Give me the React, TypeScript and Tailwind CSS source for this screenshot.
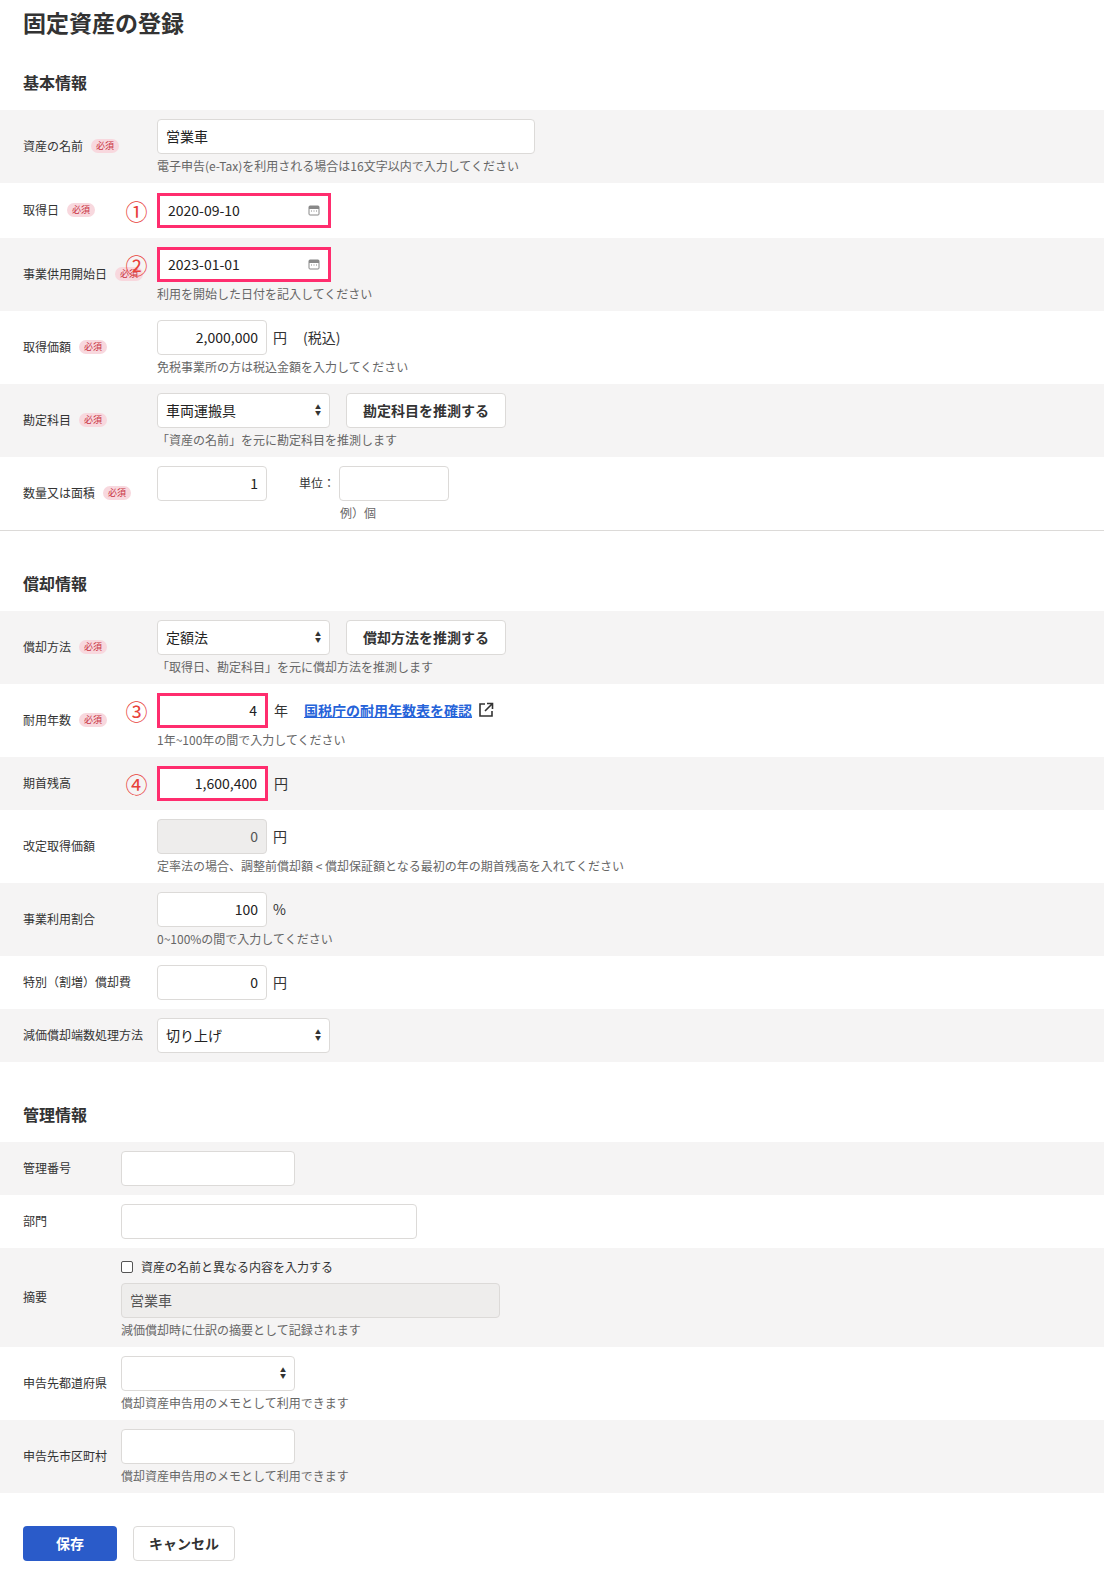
import React from "react";

const font = { fontFamily: '"Noto Sans CJK JP", "Noto Sans", sans-serif' };

function Badge() {
  return <span className="ml-2 rounded-full bg-[#f8d8de] px-[5px] text-[9px] leading-[14px] text-[#c8323f]">必須</span>;
}

function Row({ label, req, gray, children, lw = "w-[134px]" }: { label: string; req?: boolean; gray?: boolean; children: React.ReactNode; lw?: string }) {
  return (
    <div className={`flex items-center py-[9px] pl-[23px] ${gray ? "bg-[#f5f4f4]" : "bg-white"}`}>
      <div className={`${lw} shrink-0 flex items-center text-xs text-[#333]`}>
        {label}
        {req && <Badge />}
      </div>
      <div className="flex flex-col">{children}</div>
    </div>
  );
}

function Help({ children }: { children: React.ReactNode }) {
  return <div className="mt-1 text-xs leading-[16px] text-[#666]">{children}</div>;
}

function Box({ w, children, right, disabled, hl }: { w: string; children?: React.ReactNode; right?: boolean; disabled?: boolean; hl?: boolean }) {
  return (
    <div
      className={`${w} h-[35px] flex items-center rounded-[4px] px-2 text-sm text-[#222] ${right ? "justify-end" : ""} ${disabled ? "bg-[#eeedec] border border-[#dcdad8] text-[#555]" : "bg-white"} ${hl ? "border-[3px] border-[#ff2d6e] rounded-none" : disabled ? "" : "border border-[#dcdad8]"}`}
    >
      {children}
    </div>
  );
}

function Sel({ w, value }: { w: string; value: string }) {
  return (
    <div className={`${w} h-[35px] flex items-center justify-between rounded-[4px] border border-[#dcdad8] bg-white px-2 text-sm text-[#222]`}>
      <span>{value}</span>
      <span className="flex flex-col text-[6px] leading-[6px] text-[#333]">
        <span>▲</span>
        <span>▼</span>
      </span>
    </div>
  );
}

function Btn({ children }: { children: React.ReactNode }) {
  return <div className="ml-4 flex h-[35px] items-center rounded-[4px] border border-[#dcdad8] bg-white px-4 text-sm font-bold text-[#333]">{children}</div>;
}

function Num({ n }: { n: string }) {
  return <span className="w-[27px] -ml-[34px] mr-[7px] text-center text-[22px] leading-none text-[#e8413a]">{n}</span>;
}

function Cal() {
  return (
    <svg width="12" height="12" viewBox="0 0 12 12" className="ml-auto">
      <rect x="1" y="2" width="10" height="9" rx="1" fill="none" stroke="#888" />
      <rect x="1" y="2" width="10" height="3" fill="#888" />
      <path d="M3 7h1M5.5 7h1M8 7h1" stroke="#888" />
    </svg>
  );
}

const Unit = ({ children }: { children: React.ReactNode }) => <span className="ml-[6px] text-sm text-[#333]">{children}</span>;

function Heading({ children }: { children: React.ReactNode }) {
  return <h2 className="pl-[23px] pt-[40px] pb-[16px] text-base font-bold text-[#333]">{children}</h2>;
}

export default function App() {
  return (
    <div className="w-[1104px] bg-white pb-[50px]" style={font}>
      <h1 className="pl-[23px] pt-[5px] text-[23px] font-bold text-[#333]">固定資産の登録</h1>
      <h2 className="pl-[23px] pt-[30px] pb-[16px] text-base font-bold text-[#333]">基本情報</h2>

      <Row label="資産の名前" req gray>
        <Box w="w-[378px]">営業車</Box>
        <Help>電子申告(e-Tax)を利用される場合は16文字以内で入力してください</Help>
      </Row>
      <Row label="取得日" req>
        <div className="flex items-center py-[1px]">
          <Num n="①" />
          <Box w="w-[174px]" hl>2020-09-10<Cal /></Box>
        </div>
      </Row>
      <Row label="事業供用開始日" req gray>
        <div className="flex items-center">
          <Num n="②" />
          <Box w="w-[174px]" hl>2023-01-01<Cal /></Box>
        </div>
        <Help>利用を開始した日付を記入してください</Help>
      </Row>
      <Row label="取得価額" req>
        <div className="flex items-center">
          <Box w="w-[110px]" right>2,000,000</Box>
          <Unit>円</Unit>
          <span className="ml-4 text-sm text-[#333]">(税込)</span>
        </div>
        <Help>免税事業所の方は税込金額を入力してください</Help>
      </Row>
      <Row label="勘定科目" req gray>
        <div className="flex items-center">
          <Sel w="w-[173px]" value="車両運搬具" />
          <Btn>勘定科目を推測する</Btn>
        </div>
        <Help>「資産の名前」を元に勘定科目を推測します</Help>
      </Row>
      <Row label="数量又は面積" req>
        <div className="flex items-center">
          <Box w="w-[110px]" right>1</Box>
          <span className="ml-8 mr-1 text-xs text-[#333]">単位：</span>
          <Box w="w-[110px]" />
        </div>
        <div className="mt-1 pl-[183px] text-xs leading-[16px] text-[#666]">例）個</div>
      </Row>
      <div className="border-t border-[#dcdad8]" />

      <Heading>償却情報</Heading>
      <Row label="償却方法" req gray>
        <div className="flex items-center">
          <Sel w="w-[173px]" value="定額法" />
          <Btn>償却方法を推測する</Btn>
        </div>
        <Help>「取得日、勘定科目」を元に償却方法を推測します</Help>
      </Row>
      <Row label="耐用年数" req>
        <div className="flex items-center">
          <Num n="③" />
          <Box w="w-[111px]" right hl>4</Box>
          <Unit>年</Unit>
          <a className="ml-4 text-sm font-bold text-[#2563d9] underline">国税庁の耐用年数表を確認</a>
          <svg width="16" height="16" viewBox="0 0 16 16" className="ml-[6px]" fill="none" stroke="#333" strokeWidth="1.6">
            <path d="M7 2H2v12h12V9" />
            <path d="M9 1.5h5.5V7M14.5 1.5L7 9" />
          </svg>
        </div>
        <Help>1年~100年の間で入力してください</Help>
      </Row>
      <Row label="期首残高" gray>
        <div className="flex items-center">
          <Num n="④" />
          <Box w="w-[111px]" right hl>1,600,400</Box>
          <Unit>円</Unit>
        </div>
      </Row>
      <Row label="改定取得価額">
        <div className="flex items-center">
          <Box w="w-[110px]" right disabled>0</Box>
          <Unit>円</Unit>
        </div>
        <Help>定率法の場合、調整前償却額 &lt; 償却保証額となる最初の年の期首残高を入れてください</Help>
      </Row>
      <Row label="事業利用割合" gray>
        <div className="flex items-center">
          <Box w="w-[110px]" right>100</Box>
          <Unit>%</Unit>
        </div>
        <Help>0~100%の間で入力してください</Help>
      </Row>
      <Row label="特別（割増）償却費">
        <div className="flex items-center">
          <Box w="w-[110px]" right>0</Box>
          <Unit>円</Unit>
        </div>
      </Row>
      <Row label="減価償却端数処理方法" gray>
        <Sel w="w-[173px]" value="切り上げ" />
      </Row>

      <Heading>管理情報</Heading>
      <Row label="管理番号" gray lw="w-[98px]">
        <Box w="w-[174px]" />
      </Row>
      <Row label="部門" lw="w-[98px]">
        <Box w="w-[296px]" />
      </Row>
      <Row label="摘要" gray lw="w-[98px]">
        <label className="mb-2 mt-[2px] flex items-center text-xs text-[#333]">
          <span className="mr-2 h-[12px] w-[12px] rounded-[2px] border border-[#555] bg-white" />
          資産の名前と異なる内容を入力する
        </label>
        <Box w="w-[379px]" disabled>営業車</Box>
        <Help>減価償却時に仕訳の摘要として記録されます</Help>
      </Row>
      <Row label="申告先都道府県" lw="w-[98px]">
        <Sel w="w-[174px]" value="" />
        <Help>償却資産申告用のメモとして利用できます</Help>
      </Row>
      <Row label="申告先市区町村" gray lw="w-[98px]">
        <Box w="w-[174px]" />
        <Help>償却資産申告用のメモとして利用できます</Help>
      </Row>

      <div className="flex gap-4 pl-[23px] pt-[33px]">
        <div className="flex h-[35px] w-[94px] items-center justify-center rounded-[4px] bg-[#2a5bc9] text-sm font-bold text-white">保存</div>
        <div className="flex h-[35px] w-[102px] items-center justify-center rounded-[4px] border border-[#dcdad8] bg-white text-sm font-bold text-[#333]">キャンセル</div>
      </div>
    </div>
  );
}
